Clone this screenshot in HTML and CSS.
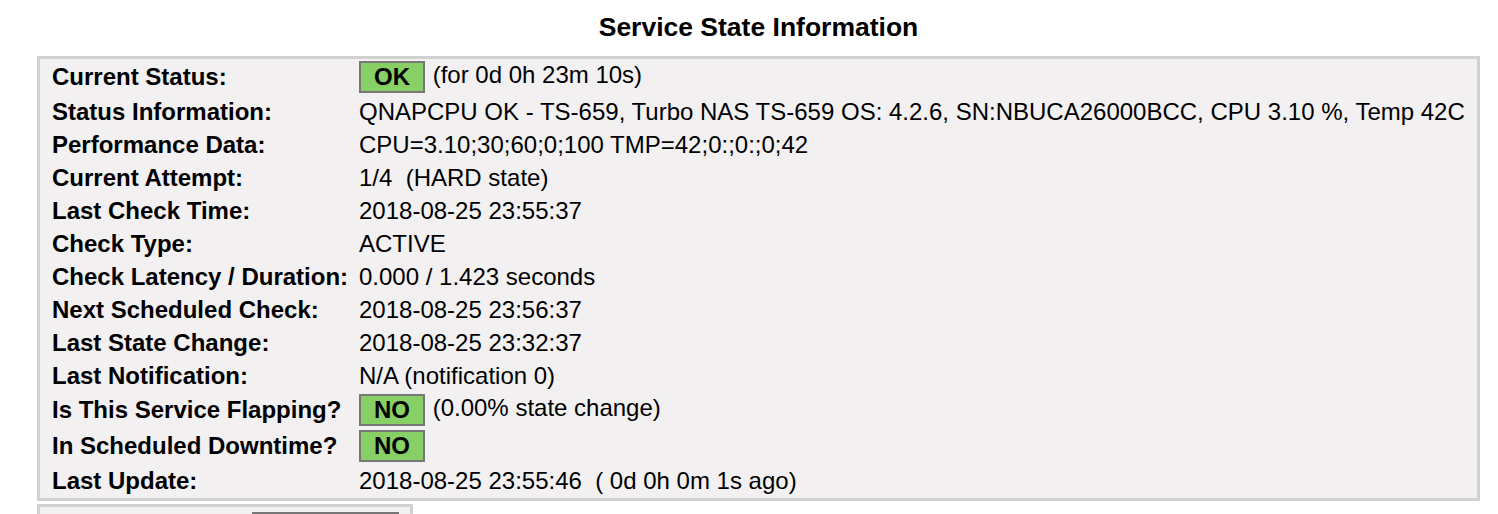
FILE: index.html
```html
<!DOCTYPE html>
<html lang="en">
<head>
  <meta charset="UTF-8">
  <title>Service State Information</title>
  <link rel="stylesheet" href="styles.css">
</head>
<body>
  <div class="page">
    <h2 class="title">Service State Information</h2>

    <div class="state-box">
      <table class="state-table">
        <tr class="tall">
          <td class="label">Current Status:</td>
          <td class="value"><span class="badge">OK</span> (for 0d 0h 23m 10s)</td>
        </tr>
        <tr>
          <td class="label">Status Information:</td>
          <td class="value">QNAPCPU OK - TS-659, Turbo NAS TS-659 OS: 4.2.6, SN:NBUCA26000BCC, CPU 3.10 %, Temp 42C</td>
        </tr>
        <tr>
          <td class="label">Performance Data:</td>
          <td class="value">CPU=3.10;30;60;0;100 TMP=42;0:;0:;0;42</td>
        </tr>
        <tr>
          <td class="label">Current Attempt:</td>
          <td class="value">1/4&nbsp;&nbsp;(HARD state)</td>
        </tr>
        <tr>
          <td class="label">Last Check Time:</td>
          <td class="value">2018-08-25 23:55:37</td>
        </tr>
        <tr>
          <td class="label">Check Type:</td>
          <td class="value">ACTIVE</td>
        </tr>
        <tr>
          <td class="label">Check Latency / Duration:</td>
          <td class="value">0.000&nbsp;/&nbsp;1.423 seconds</td>
        </tr>
        <tr>
          <td class="label">Next Scheduled Check:</td>
          <td class="value">2018-08-25 23:56:37</td>
        </tr>
        <tr>
          <td class="label">Last State Change:</td>
          <td class="value">2018-08-25 23:32:37</td>
        </tr>
        <tr>
          <td class="label">Last Notification:</td>
          <td class="value">N/A (notification 0)</td>
        </tr>
        <tr class="tall">
          <td class="label">Is This Service Flapping?</td>
          <td class="value"><span class="badge">NO</span> (0.00% state change)</td>
        </tr>
        <tr class="tall">
          <td class="label">In Scheduled Downtime?</td>
          <td class="value"><span class="badge">NO</span></td>
        </tr>
        <tr class="last">
          <td class="label">Last Update:</td>
          <td class="value">2018-08-25 23:55:46&nbsp;&nbsp;( 0d 0h 0m 1s ago)</td>
        </tr>
      </table>
    </div>

    <div class="next-box">
      <div class="next-bar"></div>
    </div>
  </div>
</body>
</html>
```

FILE: styles.css
```css
body {
  margin: 0;
  font-family: "Liberation Sans", Arial, sans-serif;
  color: #000;
  background: #fff;
}

.page {
  margin-left: 37px;
  width: 1443px;
}

.title {
  margin: 0 0 15px 0;
  padding-top: 13px;
  font-size: 26.5px;
  line-height: 28px;
  font-weight: bold;
  text-align: center;
}

.state-box {
  border: 3px solid #d1d1d1;
  background: #f2f0f1;
  padding: 0 12px;
}

.state-table {
  border-collapse: collapse;
  font-size: 24px;
}

.state-table td {
  padding: 0;
  height: 33px;
  vertical-align: middle;
  white-space: nowrap;
}

.state-table tr.tall td {
  height: 36px;
}

.state-table tr.last td {
  height: 34px;
}

.label {
  width: 307px;
  font-weight: bold;
}

.badge {
  display: inline-block;
  box-sizing: border-box;
  width: 66px;
  height: 32px;
  line-height: 28px;
  margin-right: 1px;
  border: 2px solid #777;
  background: #88d066;
  font-weight: bold;
  text-align: center;
  vertical-align: middle;
}

.next-box {
  margin-top: 3px;
  width: 376px;
  height: 30px;
  box-sizing: border-box;
  border: 3px solid #d1d1d1;
  background: #f2f0f1;
  padding: 5px 0 0 212px;
}

.next-bar {
  width: 147px;
  height: 20px;
  background: #777;
}
```
